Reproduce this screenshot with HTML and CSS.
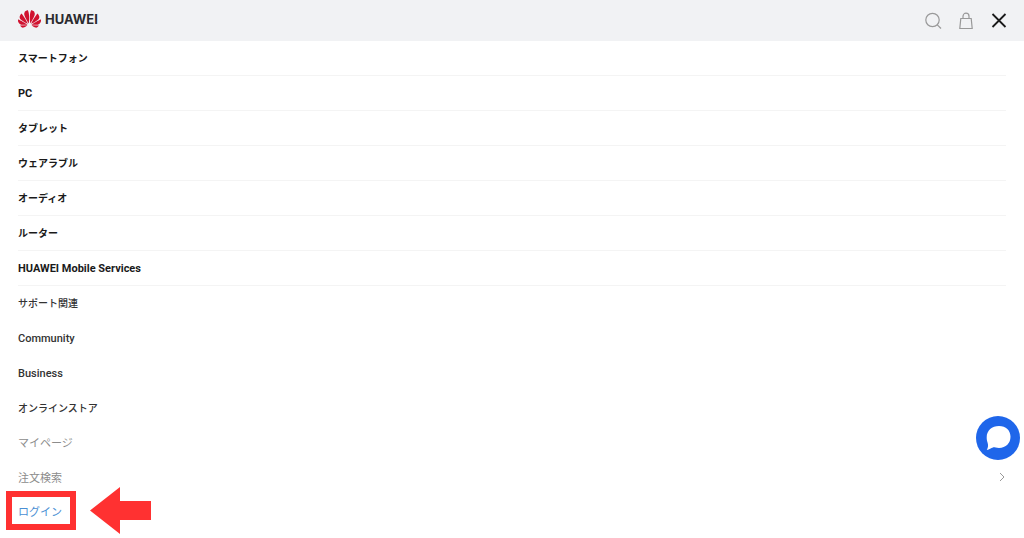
FILE: index.html
```html
<!DOCTYPE html>
<html lang="ja">
<head>
<meta charset="UTF-8" />
<meta name="viewport" content="width=device-width, initial-scale=1" />
<title>HUAWEI</title>
<link rel="stylesheet" href="styles.css">
</head>
<body>
  <header class="header">
    <a class="logo" href="#">
      <svg class="logo-mark" viewBox="0 3 24 18" aria-hidden="true">
        <defs>
          <g id="petals">
            <path d="M3.67 6.14S1.82 7.91 1.72 9.78v.35c.08 1.51 1.22 2.4 1.22 2.4 1.83 1.79 6.26 4.04 7.3 4.55 0 0 .06.03.1-.01l.02-.04v-.04C7.52 10.8 3.67 6.14 3.67 6.14z" />
            <path d="M9.65 18.6c-.02-.08-.1-.08-.1-.08l-7.38.26c.8 1.43 2.15 2.53 3.56 2.2.96-.25 3.16-1.78 3.88-2.3.06-.05.04-.09.04-.09z" />
            <path d="M9.73 17.82C6.49 15.63.21 12.28.21 12.28c-.15.46-.2.9-.21 1.3v.07c0 1.07.4 1.82.4 1.82.8 1.69 2.34 2.2 2.34 2.2.7.3 1.4.31 1.4.31.12.02 4.4 0 5.54 0 .05 0 .08-.05.08-.05v-.06z" />
            <path d="M9.06 3.19a3.42 3.42 0 0 0-2.57 3.15v.41c.03.6.16 1.05.16 1.05.66 2.9 3.86 7.65 4.55 8.65.05.05.1.03.1.03a.1.1 0 0 0 .06-.1c1.06-10.6-1.11-13.42-1.11-13.42-.32.02-1.19.23-1.19.23z" />
          </g>
        </defs>
        <use href="#petals" />
        <use href="#petals" transform="translate(24 0) scale(-1 1)" />
      </svg>
      <span>HUAWEI</span>
    </a>
    <div class="actions">
      <button type="button" class="icon-btn" aria-label="検索">
        <svg viewBox="0 0 18 18"><circle cx="8.500" cy="8" r="6.700" /><path d="M13.300 12.800L17 16.500" /></svg>
      </button>
      <button type="button" class="icon-btn" aria-label="カート">
        <svg viewBox="0 0 18 18"><path d="M3.800 6.500h10.400l1 10H2.800zM6 6.500V4.200a3 3 0 0 1 6 0v2.300" /></svg>
      </button>
      <button type="button" class="icon-btn close" aria-label="閉じる">
        <svg viewBox="0 0 18 18"><path d="M2.500 2l13 13M15.500 2l-13 13" /></svg>
      </button>
    </div>
  </header>

  <nav class="menu">
    <ul class="products">
      <li><a href="#">スマートフォン</a></li>
      <li><a href="#" class="latin">PC</a></li>
      <li><a href="#">タブレット</a></li>
      <li><a href="#">ウェアラブル</a></li>
      <li><a href="#">オーディオ</a></li>
      <li><a href="#">ルーター</a></li>
      <li><a href="#" class="latin">HUAWEI Mobile Services</a></li>
    </ul>
    <ul class="links">
      <li><a href="#">サポート関連</a></li>
      <li><a href="#" class="latin">Community</a></li>
      <li><a href="#" class="latin">Business</a></li>
      <li><a href="#">オンラインストア</a></li>
    </ul>
    <ul class="links account">
      <li><a href="#">マイページ</a></li>
      <li>
        <a href="#">注文検索
          <svg class="chevron" viewBox="0 0 8 10" aria-hidden="true"><path d="M2 1l4 4-4 4" /></svg>
        </a>
      </li>
      <li class="login">
        <a href="#">ログイン</a>
        <span class="highlight"></span>
        <svg class="arrow" viewBox="0 0 61 47" aria-hidden="true"><path d="M0 23.500L30 0v14h31v19H30v14z" /></svg>
      </li>
    </ul>
  </nav>

  <button type="button" class="chat" aria-label="チャット">
    <svg viewBox="0 0 44 44"><path d="M23 10c7 0 11.500 4.500 11.500 10.800S30 32 23 32c-3 0-4.500-.8-6-.6-2 .3-3.500 2.200-6.200 2.500 1.500-2.700 1.500-4.600.8-7.100-.7-2-.9-3.500-.9-5.500C10.700 14.500 15.900 10 23 10z" /></svg>
  </button>
</body>
</html>
```

FILE: styles.css
```css
*, *::before, *::after {
  box-sizing: border-box;
}
body {
  margin: 0;
  min-height: 100vh;
  background: #fff;
  color: #1a1a1a;
  font-family: Roboto, "Noto Sans CJK JP", sans-serif;
  font-size: 10px;
}
a {
  color: inherit;
  text-decoration: none;
}
ul {
  list-style: none;
  margin: 0;
  padding: 0;
}
button {
  border: none;
  padding: 0;
  background: none;
  cursor: pointer;
}
svg {
  display: block;
}

/* Header */
.header {
  display: flex;
  justify-content: space-between;
  height: 41px;
  padding: 0 16px 0 18px;
  background: #f1f2f4;
}
.logo {
  display: flex;
  align-items: center;
  gap: 4px;
  height: 37px;
  color: #2b2b2f;
  font-family: Inter, sans-serif;
  font-size: 13px;
  font-weight: 700;
}
.logo-mark {
  width: 23px;
  height: 18px;
  fill: #d0122f;
}
.actions {
  display: flex;
  align-items: center;
  gap: 15px;
}
.icon-btn svg {
  width: 18px;
  height: 18px;
  fill: none;
  stroke: #999;
  stroke-width: 1.2;
}
.icon-btn.close svg {
  stroke: #1a1a1a;
  stroke-width: 1.8;
}

/* Menu */
.menu {
  padding: 0 18px;
}
.menu a {
  display: flex;
  align-items: center;
  justify-content: space-between;
  height: 34px;
  padding-bottom: 2px;
}
.menu .latin {
  padding-bottom: 0;
  font-size: 11px;
}
.products li {
  border-bottom: 1px solid #f4f4f4;
  font-weight: 700;
}
.links li {
  height: 35px;
  color: #333;
  font-weight: 500;
}
.account li {
  color: #8c8c8c;
  font-size: 11px;
  font-weight: 400;
}
.chevron {
  width: 8px;
  height: 10px;
  fill: none;
  stroke: #999;
}

/* Login callout */
.account .login {
  position: relative;
  color: #4a8fd4;
}
.menu .login a {
  width: 46px;
  height: 32px;
}
.highlight {
  position: absolute;
  top: -5px;
  left: -12px;
  width: 70px;
  height: 39px;
  border: 6px solid #ff3131;
  pointer-events: none;
}
.arrow {
  position: absolute;
  top: -9px;
  left: 72px;
  width: 61px;
  height: 47px;
  fill: #ff3131;
}

/* Chat button */
.chat {
  position: fixed;
  right: 4px;
  bottom: 78px;
  width: 44px;
  height: 44px;
  border-radius: 50%;
  background: #1f66ea;
}
.chat svg {
  fill: #fff;
}
```
